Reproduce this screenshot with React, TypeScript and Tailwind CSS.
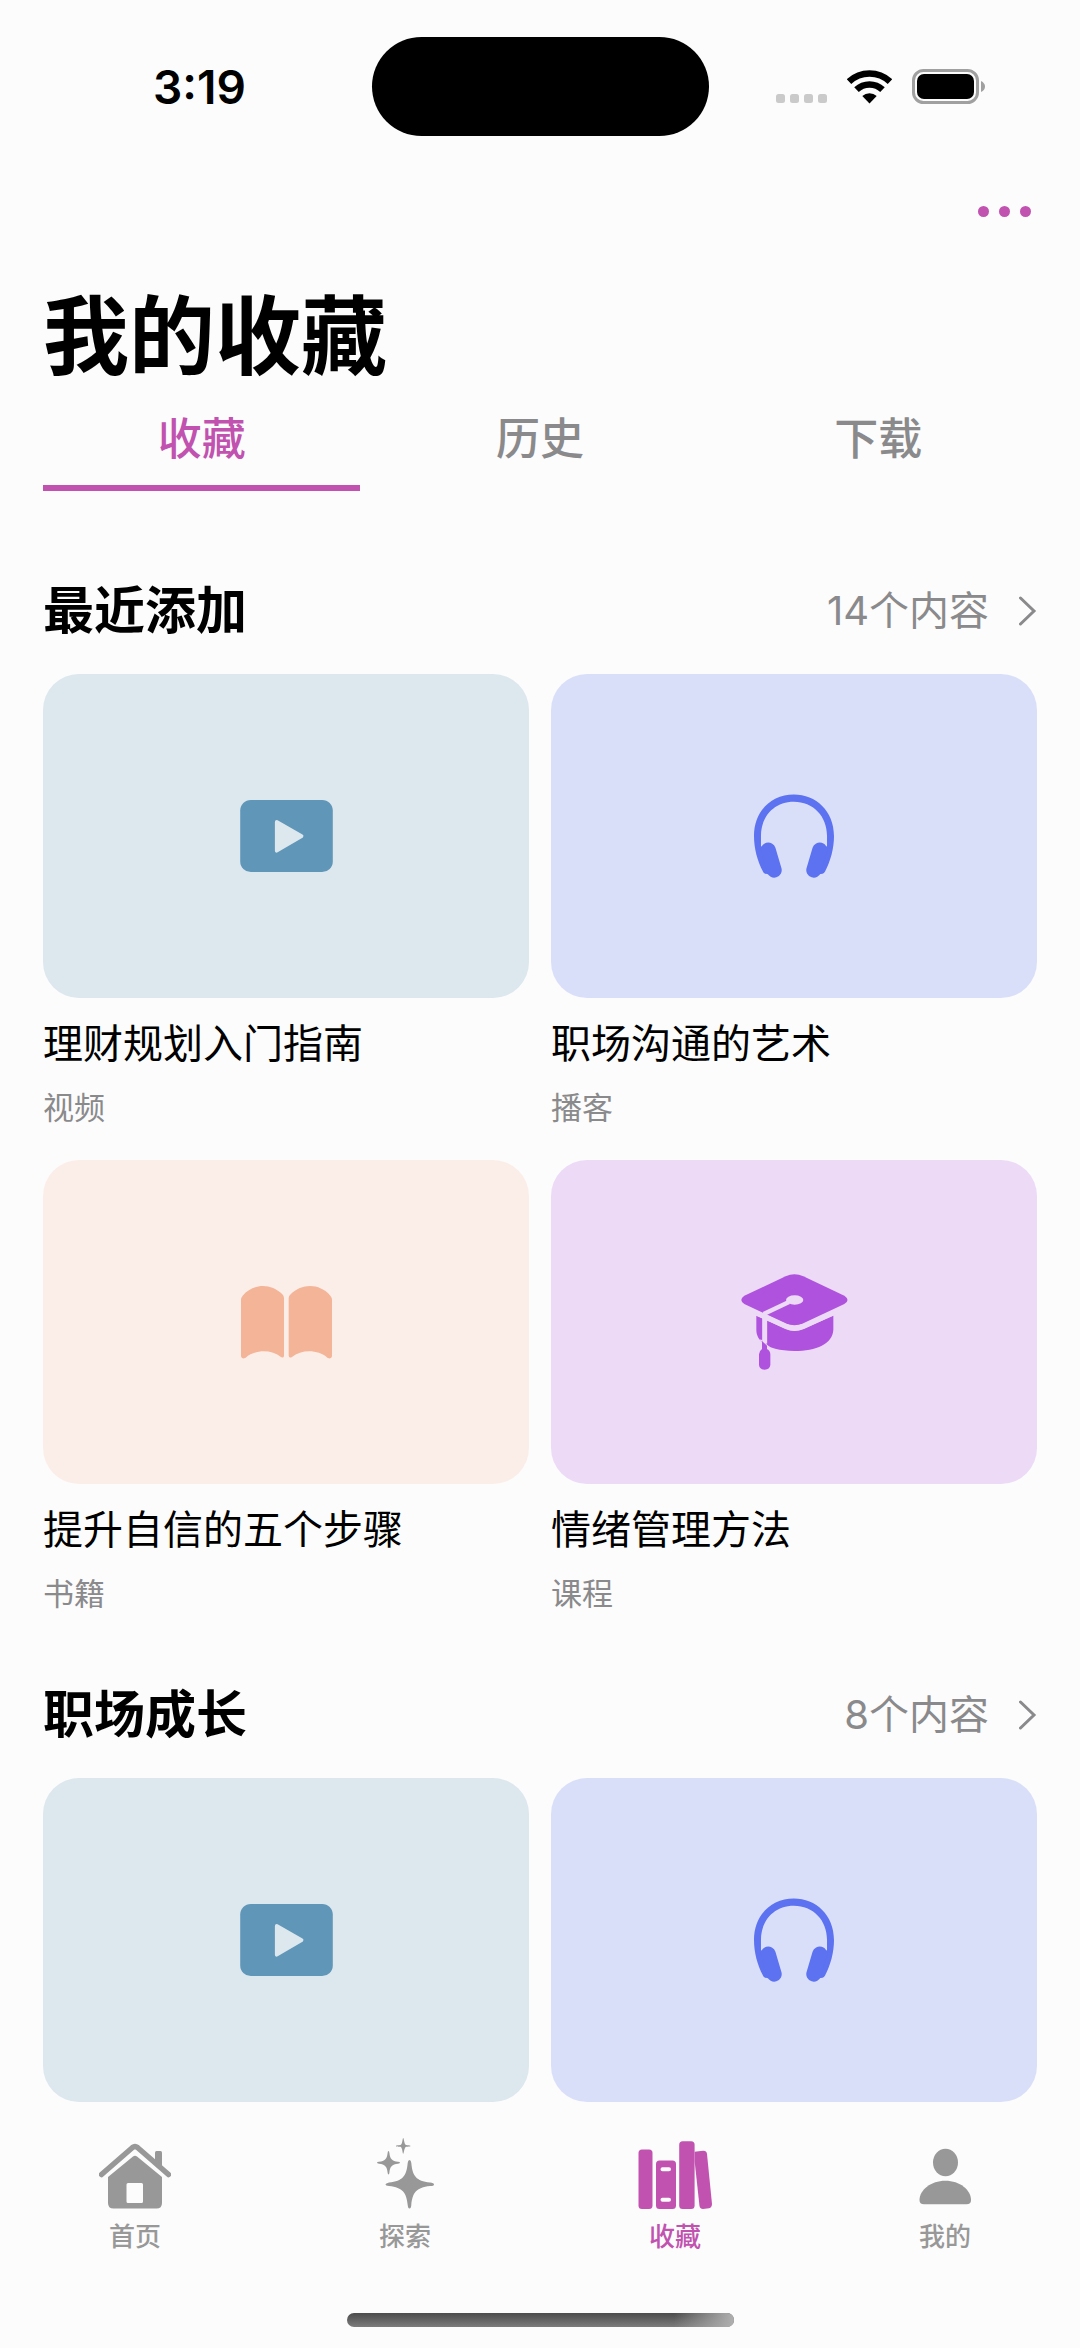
import { useState } from "react";
import type { ReactNode } from "react";

type MediaType = "video" | "podcast" | "book" | "course";

interface MediaItem {
  title: string;
  type: MediaType;
}

interface SectionProps {
  title: string;
  count: number;
  items: MediaItem[];
  showText?: boolean;
}

const VideoIcon = () => (
  <svg width="93" height="72" viewBox="120 119 279 217" aria-hidden="true">
    <rect x="120" y="119" width="279" height="217" rx="32" fill="#6096b8" />
    <path
      d="M230 185 L305 228 L230 272 Z"
      fill="#dce7ee"
      stroke="#dce7ee"
      strokeWidth="11"
      strokeLinejoin="round"
    />
  </svg>
);

const HeadphonesIcon = () => (
  <svg
    width="80"
    height="84"
    viewBox="132 99 241 252"
    fill="#5c72f0"
    aria-hidden="true"
  >
    <path d="M159 332C142 300 132 262 132 225C132 150 185 100 252 100S373 150 373 225C373 262 363 300 346 332C342 340 336 340 328 340L338 262L352 256V225C352 165 310 122 252 122S153 165 153 225V256L165 262L177 340C168 340 163 340 159 332Z" />
    <path
      d="M175 267L193 328M330 267L312 328"
      stroke="#5c72f0"
      strokeWidth="45"
      strokeLinecap="round"
    />
  </svg>
);

const BookIcon = () => (
  <svg
    width="91"
    height="73"
    viewBox="123 107 273 219"
    fill="#f4b498"
    aria-hidden="true"
  >
    <path d="M123 148Q123 142 128 136C160 99 213 98 247 132Q252 137 252 144V316Q251 325 243 320C215 297 165 297 137 322Q125 328 123 318Z" />
    <path d="M396 148Q396 142 391 136C359 99 306 98 272 132Q266 137 266 144V316Q268 325 276 320C304 297 354 297 382 322Q394 328 396 318Z" />
  </svg>
);

const CourseIcon = () => (
  <svg
    width="107"
    height="96"
    viewBox="92 73 321 288"
    fill="#af52de"
    aria-hidden="true"
  >
    <path d="M138 198L228 238Q252 249 278 238L369 198V240C367 282 318 304 252 304C186 304 138 282 138 240Z" />
    <path d="M226 80Q252 68 279 80L402 138Q421 151 402 163L279 221Q252 233 226 221L102 163Q84 151 102 138Z" />
    <g stroke="#ecdaf6" fill="none">
      <path d="M138 190L228 231Q252 242 278 231L372 188" strokeWidth="15" />
      <path d="M236 157L160 193" strokeWidth="13" />
      <path d="M163 194V282" strokeWidth="15" />
      <path d="M150 270L178 294" strokeWidth="4" />
    </g>
    <ellipse cx="253" cy="151" rx="26" ry="14" fill="#ecdaf6" />
    <path d="M155 274L170 288V298Q180 304 180 314V346Q178 360 163 360T146 346V314Q146 304 155 298Z" />
  </svg>
);

const HomeIcon = () => (
  <svg width="72" height="72" viewBox="0 0 72 72" fill="currentColor">
    <path
      d="M2.5 35.5L33.5 8.5Q36 6.5 38.500 8.500L69.500 35.500"
      fill="none"
      stroke="currentColor"
      strokeWidth="5.500"
      strokeLinecap="round"
    />
    <path d="M56 26V13.500Q56 12 57.500 12H61.500Q63 12 63 13.500V31Z" />
    <path
      fillRule="evenodd"
      d="M34 17.500Q36 16 38 17.500L63 38V64Q63 69.500 57.500 69.500H14.500Q9 69.500 9 64V38ZM29 44Q27.500 44 27.500 45.500V62.500Q27.500 64 29 64H42.500Q44 64 44 62.500V45.500Q44 44 42.500 44Z"
    />
  </svg>
);

const ExploreIcon = () => (
  <svg
    width="72"
    height="72"
    viewBox="0 0 72 72"
    fill="currentColor"
    overflow="visible"
  >
    <path d="M40.500 21Q42 21 42.300 24C43.500 37 47 42 61 43.500Q65 44 65 45.500T61 47C47 48.500 43.500 54 42.300 66Q42 69.500 40.500 69.500T38.700 66C37.500 54 34 48.500 20 47Q16.500 46.500 16.500 45.500T20 43.500C34 42 37.500 37 38.700 24Q39 21 40.500 21Z" />
    <path d="M19.500 12Q20.200 12 20.400 14C21 20 23 22 29 22.800Q31 23 31 23.700T29 24.700C23 25.500 21 27.500 20.400 33.500Q20.200 35.500 19.500 35.500T18.600 33.500C18 27.500 16 25.500 10 24.700Q8 24.400 8 23.700T10 22.800C16 22 18 20 18.600 14Q18.800 12 19.500 12Z" />
    <path d="M34.200 -1C34.900 -1 35.200 5.500 37 6C38 6.300 41.500 6.200 41.500 6.900S38 7.500 37 7.800C35.200 8.500 34.900 14.700 34.200 14.700S33.500 8.500 31.500 7.800C30 7.500 27 7.600 27 6.900S30 6.300 31.500 6C33.500 5.500 33.500 -1 34.200 -1Z" />
  </svg>
);

const LibraryIcon = () => (
  <svg
    width="72"
    height="72"
    viewBox="0 0 72 72"
    fill="currentColor"
    overflow="visible"
  >
    <rect x="-0.5" y="10.5" width="14" height="59.500" rx="3.500" />
    <path
      fillRule="evenodd"
      d="M20.500 21.500H33.500Q37 21.500 37 25V66.500Q37 70 33.500 70H20.500Q17 70 17 66.500V25Q17 21.500 20.500 21.500ZM23.500 28.300A2 2 0 0 0 23.500 32.300H30A2 2 0 0 0 30 28.300ZM23.500 58.800A2 2 0 0 0 23.500 62.800H30A2 2 0 0 0 30 58.800Z"
    />
    <rect x="40.200" y="2.300" width="15.400" height="67.700" rx="3.500" />
    <path d="M55.600 12.800L64 11.700Q67.500 11.500 68 15L73 65Q73 68.500 70 69.200L64 70Q61 70 60.500 67L55.600 22Z" />
  </svg>
);

const ProfileIcon = () => (
  <svg width="72" height="72" viewBox="0 0 72 72" fill="currentColor">
    <ellipse cx="36.500" cy="23.500" rx="12.500" ry="13.800" />
    <path d="M36.300 41.700C51 41.700 62 51 62 61Q62 65.300 57.500 65.300H15Q10.500 65.300 10.500 61C10.500 51 22 41.700 36.300 41.700Z" />
  </svg>
);

const mediaStyles: Record<
  MediaType,
  { label: string; background: string; icon: ReactNode }
> = {
  video: { label: "视频", background: "bg-[#dce7ee]", icon: <VideoIcon /> },
  podcast: {
    label: "播客",
    background: "bg-[#dadff9]",
    icon: <HeadphonesIcon />,
  },
  book: { label: "书籍", background: "bg-[#fbeee9]", icon: <BookIcon /> },
  course: { label: "课程", background: "bg-[#ecdaf6]", icon: <CourseIcon /> },
};

const tabs = ["收藏", "历史", "下载"];

const navItems = [
  { label: "首页", icon: <HomeIcon /> },
  { label: "探索", icon: <ExploreIcon /> },
  { label: "收藏", icon: <LibraryIcon />, active: true },
  { label: "我的", icon: <ProfileIcon /> },
];

const recentItems: MediaItem[] = [
  { title: "理财规划入门指南", type: "video" },
  { title: "职场沟通的艺术", type: "podcast" },
  { title: "提升自信的五个步骤", type: "book" },
  { title: "情绪管理方法", type: "course" },
];

const careerItems: MediaItem[] = [
  { title: "职场成长视频", type: "video" },
  { title: "职场成长播客", type: "podcast" },
];

const StatusBar = () => (
  <div className="grid h-[173px] grid-cols-[1fr_auto_1fr] items-center">
    <span className="pl-[153px] text-[46px] leading-[48px] font-semibold">
      3:19
    </span>
    <div className="h-[99px] w-[337px] rounded-full bg-black" />
    <div className="flex items-center justify-end pr-[95px]">
      <svg width="51" height="34" viewBox="0 0 51 34" fill="#cacaca">
        <rect x="0" y="24" width="9" height="9" rx="2.500" />
        <rect x="14" y="24" width="9" height="9" rx="2.500" />
        <rect x="28" y="24" width="9" height="9" rx="2.500" />
        <rect x="42" y="24" width="9" height="9" rx="2.500" />
      </svg>
      <svg
        className="ml-5"
        width="45"
        height="34"
        viewBox="0 0 45 34"
        fill="none"
        stroke="#000"
        strokeWidth="6.600"
      >
        <path d="M2 11.600A30 30 0 0 1 43 11.600" />
        <path d="M9.500 19.600A19 19 0 0 1 35.500 19.600" />
        <path
          d="M22.500 33.500L15.300 26A10.500 10.500 0 0 1 29.700 26Z"
          fill="#000"
          stroke="none"
        />
      </svg>
      <svg className="ml-5" width="73" height="35" viewBox="0 0 73 35">
        <rect
          x="1.500"
          y="1.500"
          width="64"
          height="32"
          rx="10"
          fill="none"
          stroke="#a0a0a0"
          strokeWidth="3"
        />
        <rect x="5" y="5" width="57" height="25" rx="7" />
        <path d="M69 12Q73 14 73 17.500T69 23Z" fill="#a0a0a0" />
      </svg>
    </div>
  </div>
);

const Section = ({ title, count, items, showText = true }: SectionProps) => {
  return (
    <section className="px-[43px]">
      <div className="flex items-center justify-between">
        <h2 className="text-[51px] leading-[72px] font-bold">{title}</h2>
        <button className="flex items-center gap-[30px] text-[40px] leading-[72px] text-[#8a8a8c]">
          {count}个内容
          <svg
            width="18"
            height="30"
            viewBox="0 0 18 30"
            fill="none"
            stroke="currentColor"
            strokeWidth="3"
            strokeLinecap="round"
            aria-hidden="true"
          >
            <path d="M1.500 2L15 15L1.500 28" />
          </svg>
        </button>
      </div>

      <div className="mt-[27px] grid grid-cols-2 gap-x-[22px] gap-y-[30px]">
        {items.map((item) => {
          const media = mediaStyles[item.type];
          return (
            <a href="#" key={item.title} aria-label={item.title}>
              <div
                className={`flex h-[324px] items-center justify-center rounded-[36px] ${media.background}`}
              >
                {media.icon}
              </div>
              {showText && (
                <>
                  <h3 className="mt-[18px] text-[40px] leading-[56px]">
                    {item.title}
                  </h3>
                  <p className="mt-[14px] text-[31px] leading-[44px] text-[#8a8a8c]">
                    {media.label}
                  </p>
                </>
              )}
            </a>
          );
        })}
      </div>
    </section>
  );
};

const App = () => {
  const [activeTab, setActiveTab] = useState("收藏");

  return (
    <div className="flex min-h-screen flex-col bg-[#fcfcfc] font-['Inter','Noto_Sans_CJK_SC',sans-serif] text-black">
      <StatusBar />

      <header className="px-[43px]">
        <div className="flex h-[76px] items-center justify-end">
          <button aria-label="更多" className="mr-1.5 flex gap-2.5">
            <span className="size-[11px] rounded-full bg-[#c152b0]" />
            <span className="size-[11px] rounded-full bg-[#c152b0]" />
            <span className="size-[11px] rounded-full bg-[#c152b0]" />
          </button>
        </div>
        <h1 className="mt-7 text-[86px] leading-[120px] font-bold">我的收藏</h1>
        <div role="tablist" className="mt-2.5 grid grid-cols-3 gap-[21px]">
          {tabs.map((tab) => (
            <button
              key={tab}
              role="tab"
              aria-selected={tab === activeTab}
              onClick={() => setActiveTab(tab)}
              className={`border-b-[6px] pb-3.5 text-[44px] leading-[64px] font-medium ${
                tab === activeTab
                  ? "border-[#c152b0] text-[#c152b0]"
                  : "border-transparent text-[#8a8a8c]"
              }`}
            >
              {tab}
            </button>
          ))}
        </div>
      </header>

      <main className="flex flex-col gap-[63px] pt-[84px]">
        <Section title="最近添加" count={14} items={recentItems} />
        <Section
          title="职场成长"
          count={8}
          items={careerItems}
          showText={false}
        />
      </main>

      <nav className="mt-auto grid grid-cols-4 pt-9">
        {navItems.map((item) => (
          <a
            key={item.label}
            href="#"
            className={`flex flex-col items-center gap-2 text-[26px] leading-[36px] font-medium ${
              item.active ? "text-[#c152b0]" : "text-[#989898]"
            }`}
          >
            {item.icon}
            {item.label}
          </a>
        ))}
      </nav>
      <div className="mx-auto mt-[58px] mb-[21px] flex h-[14px] w-[387px] justify-end overflow-hidden rounded-full bg-linear-to-b from-[#4c4c4c] to-[#7c7c7c]">
        <div className="w-[60px] bg-linear-to-r from-transparent to-[#b0b0b0]" />
      </div>
    </div>
  );
};

export default App;
